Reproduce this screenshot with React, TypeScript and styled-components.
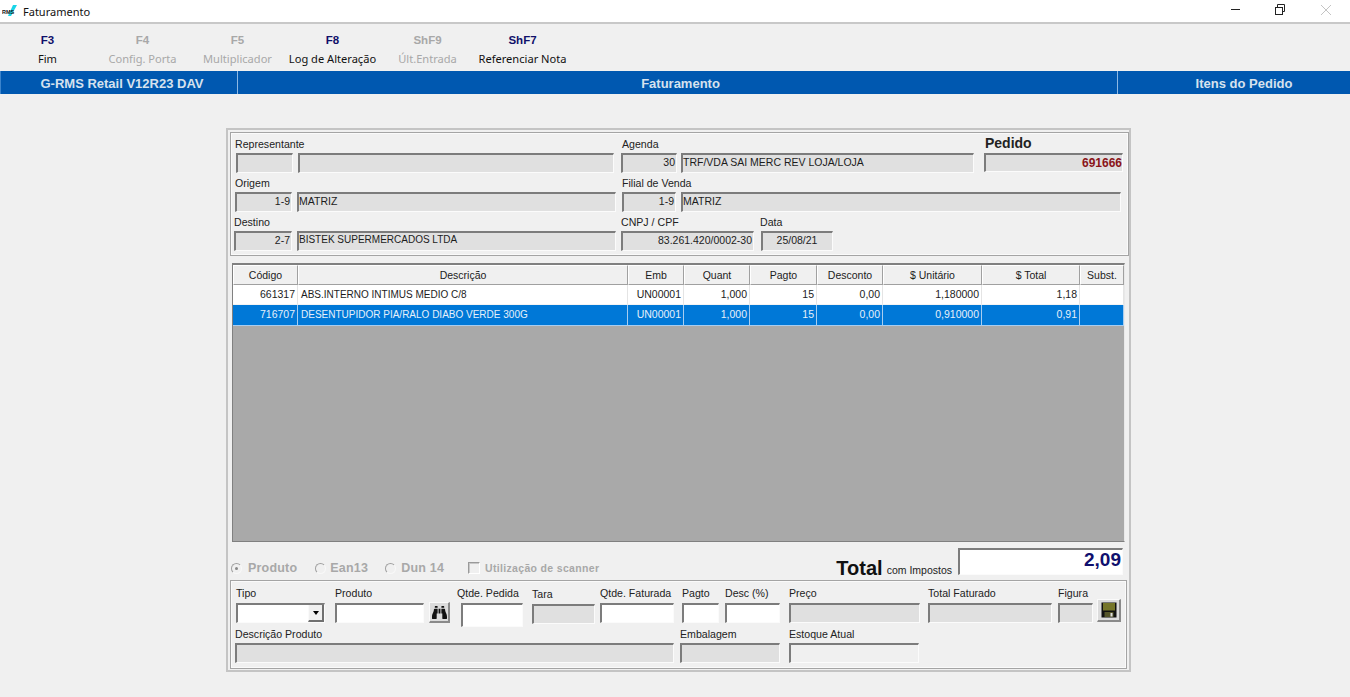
import React from "react";
import styled, { createGlobalStyle } from "styled-components";
import { FaBinoculars } from "react-icons/fa";

const Global = createGlobalStyle`
  html, body { margin: 0; padding: 0; background: #f0f0f0; }
  * { box-sizing: border-box; }
`;

const Page = styled.div`
  width: 1350px; height: 697px; overflow: hidden; background: #f0f0f0;
  font-family: "Liberation Sans", Arial, sans-serif; font-size: 11px; color: #1a1a1a;
  display: flex; flex-direction: column;
`;
const TitleBar = styled.div`
  height: 24px; flex: none; background: #fff; border-bottom: 2px solid #c8c8c8;
  display: flex; align-items: center; padding-left: 2px;
`;
const TitleText = styled.span`
  font-family: "Noto Sans", sans-serif; font-size: 11px; color: #111; margin-left: 4px; flex: 1;
`;
const WinBtn = styled.div<{ $mr?: number }>`
  width: 12px; height: 12px; margin-right: ${(p) => p.$mr ?? 0}px; margin-top: -2px; display: flex;
`;
const Toolbar = styled.div`
  height: 47px; flex: none; display: flex; padding-top: 9px;
`;
const Tool = styled.div<{ $off?: boolean }>`
  width: 95px; text-align: center; color: ${(p) => (p.$off ? "#a8a8a8" : "#111")};
`;
const ToolKey = styled.div<{ $off?: boolean }>`
  font: bold 11.5px/14px "Liberation Sans", sans-serif; color: ${(p) => (p.$off ? "#a8a8a8" : "#10106a")};
`;
const ToolLabel = styled.div`
  font: 11.1px/16px "Noto Sans", sans-serif; margin-top: 4px; white-space: nowrap;
`;
const Band = styled.div`
  height: 23px; flex: none; background: #0058b0; display: flex; border-left: 1px solid #3c84cc;
`;
const BandCell = styled.div<{ $w: number; $pl: number; $sep?: boolean }>`
  width: ${(p) => p.$w}px; padding-left: ${(p) => p.$pl}px; text-align: center;
  border-right: ${(p) => (p.$sep ? "1px solid #8db8e4" : "none")};
  font: bold 13px/25px "Liberation Sans", sans-serif; color: #d6e2ee; white-space: nowrap;
`;
const Panel = styled.div`
  width: 905px; height: 544px; margin: 34px 0 0 226px; flex: none;
  border: 2px solid #c4c4c4; display: flex; flex-direction: column; padding: 2px 0 0 2px;
`;
const Group = styled.div<{ $h: number; $pt: number; $mr?: number }>`
  height: ${(p) => p.$h}px; padding-top: ${(p) => p.$pt}px; margin-right: ${(p) => p.$mr ?? 0}px; flex: none;
  border: 1px solid #a4a4a4; box-shadow: 0 0 0 1px #fafafa inset;
  display: flex; flex-direction: column;
`;
const Row = styled.div<{ $h: number }>`
  height: ${(p) => p.$h}px; display: flex; align-items: flex-start; flex: none;
`;
const FieldWrap = styled.div<{ $w: number; $ml: number; $mt?: number }>`
  width: ${(p) => p.$w}px; margin-left: ${(p) => p.$ml}px; margin-top: ${(p) => p.$mt ?? 0}px; flex: none;
`;
const Label = styled.div<{ $lh: number; $shift?: number; $big?: boolean }>`
  height: ${(p) => p.$lh}px; margin-left: ${(p) => p.$shift ?? 0}px; white-space: nowrap;
  font-weight: ${(p) => (p.$big ? 700 : 400)}; font-size: ${(p) => (p.$big ? "14px" : "10.6px")};
  line-height: ${(p) => (p.$big ? "11px" : `${p.$lh - 2}px`)}; color: #222;
`;
const Box = styled.div<{ $h: number; $tone: "gray" | "white" | "plain"; $align?: string; $fs?: number }>`
  height: ${(p) => p.$h}px; padding: 0 1px 2px 0; overflow: hidden; white-space: nowrap;
  border-style: solid; border-width: 2px 1px 1px 2px; border-color: #7c7c7c #fbfbfb #fbfbfb #7c7c7c;
  background: ${(p) => (p.$tone === "gray" ? "#e0e0e0" : p.$tone === "white" ? "#fff" : "#f0f0f0")};
  text-align: ${(p) => p.$align ?? "left"}; font-size: ${(p) => p.$fs ?? 10.5}px; line-height: 14px; color: #1c1c1c;
`;
const PedidoValue = styled.span`
  display: block; margin-right: -1px; font-size: 12px; font-weight: 700; color: #8a1418; line-height: 17px;
`;
const Grid = styled.div`
  height: 279px; margin: 7px 0 0 2px; width: 893px; flex: none;
  border-style: solid; border-width: 2px 1px 1px 1px; border-color: #808080 #e8e8e8 #808080 #808080;
  display: flex; flex-direction: column; background: #a9a9a9;
`;
const columns = "65px 330px 56px 66px 67px 66px 99px 98px 44px";
const GridRow = styled.div<{ $sel?: boolean }>`
  display: grid; grid-template-columns: ${columns}; height: ${(p) => (p.$sel ? 21 : 20)}px; flex: none;
  background: ${(p) => (p.$sel ? "#0078d7" : "#fff")};
  color: ${(p) => (p.$sel ? "#e6f0fa" : "#1c1c1c")};
`;
const HeadCell = styled.div`
  background: #f0f0f0; text-align: center; font-size: 10.5px; line-height: 18px;
  border-right: 1px solid #a0a0a0; border-bottom: 1px solid #a0a0a0; border-left: 1px solid #fff; border-top: 1px solid #fff;
`;
const Cell = styled.div<{ $r?: boolean; $sel?: boolean }>`
  text-align: ${(p) => (p.$r ? "right" : "left")}; font-size: ${(p) => (p.$r ? 10.5 : 10)}px; line-height: 19px; padding: 0 2px 0 3px; white-space: nowrap;
  border-right: 1px solid ${(p) => (p.$sel ? "#a8cdf0" : "#e4e4e4")};
  border-bottom: 1px solid ${(p) => (p.$sel ? "#a8cdf0" : "#f4f4f4")};
`;
const Options = styled.div`
  height: 38px; flex: none; display: flex; align-items: flex-start;
`;
const RadioWrap = styled.div<{ $ml: number }>`
  margin: 19px 0 0 ${(p) => p.$ml}px; display: flex; align-items: center; height: 14px; flex: none;
`;
const Radio = styled.span<{ $on?: boolean }>`
  width: 11px; height: 11px; border-radius: 50%; flex: none; display: flex; align-items: center; justify-content: center;
  border: 1px solid; border-color: #a0a0a0 #f8f8f8 #f8f8f8 #a0a0a0;
  &::after { content: ""; width: 3px; height: 3px; border-radius: 50%; background: ${(p) => (p.$on ? "#888" : "transparent")}; }
`;
const RadioText = styled.span<{ $ml: number }>`
  margin-left: ${(p) => p.$ml}px; font-size: 12.5px; font-weight: 700; color: #a8a8a8; letter-spacing: 0.2px;
`;
const Check = styled.span`
  width: 12px; height: 12px; flex: none; border: 1px solid; border-color: #9a9a9a #fff #fff #9a9a9a; box-shadow: inset 1px 1px 0 #c8c8c8;
`;
const CheckText = styled.span`
  margin-left: 5px; font-size: 10.5px; font-weight: 700; color: #a8a8a8; letter-spacing: 0.33px;
`;
const TotalLabel = styled.span`
  margin: 13px 0 0 auto; font-size: 20px; font-weight: 700; line-height: 26px; color: #111; flex: none;
`;
const TotalSub = styled.span`
  margin: 21px 0 0 4px; font-size: 10.5px; line-height: 14px; color: #222; flex: none;
`;
const TotalBox = styled.div`
  width: 165px; height: 27px; margin: 6px 6px 0 6px; flex: none; background: #fff; text-align: right; padding-right: 1px;
  border-style: solid; border-width: 2px 1px 1px 2px; border-color: #7c7c7c #fbfbfb #fbfbfb #7c7c7c;
  font-size: 19px; font-weight: 700; line-height: 20px; color: #10106e;
`;
const Raised = styled.div<{ $w: number; $h: number; $ml: number; $mt: number }>`
  width: ${(p) => p.$w}px; height: ${(p) => p.$h}px; margin: ${(p) => p.$mt}px 0 0 ${(p) => p.$ml}px; flex: none;
  border-style: solid; border-width: 1px 2px 2px 1px; border-color: #fafafa #8a8a8a #8a8a8a #fafafa;
  background: #dcdcdc; display: flex; align-items: center; justify-content: center; color: #111;
`;
const SelectArrow = styled.div`
  float: right; width: 16px; height: 18px; margin: -1px -1px 0 0; background: #f0f0f0;
  border-style: solid; border-width: 1px 2px 2px 1px; border-color: #fafafa #707070 #707070 #fafafa;
  display: flex; align-items: center; justify-content: center;
  &::after { content: ""; border: 3.5px solid transparent; border-top: 4px solid #000; border-bottom: none; }
`;

type FieldProps = {
  label?: string; w: number; ml: number; h?: number; lh?: number; mt?: number; value?: string; fs?: number;
  tone?: "gray" | "white" | "plain"; align?: string; shift?: number; children?: React.ReactNode; big?: boolean;
};
const Field = ({ label, w, ml, h = 20, lh = 15, mt, value, fs, tone = "gray", align, shift, children, big }: FieldProps) => (
  <FieldWrap $w={w} $ml={ml} $mt={mt}>
    <Label $lh={lh} $shift={shift} $big={big}>{label}</Label>
    <Box $h={h} $tone={tone} $align={align} $fs={fs}>{value}{children}</Box>
  </FieldWrap>
);

const tools = [
  { k: "F3", l: "Fim" },
  { k: "F4", l: "Config. Porta", off: true },
  { k: "F5", l: "Multiplicador", off: true },
  { k: "F8", l: "Log de Alteração" },
  { k: "ShF9", l: "Últ.Entrada", off: true },
  { k: "ShF7", l: "Referenciar Nota" },
];
const heads = ["Código", "Descrição", "Emb", "Quant", "Pagto", "Desconto", "$ Unitário", "$ Total", "Subst."];
const rows = [
  ["661317", "ABS.INTERNO INTIMUS MEDIO C/8", "UN00001", "1,000", "15", "0,00", "1,180000", "1,18", ""],
  ["716707", "DESENTUPIDOR PIA/RALO DIABO VERDE 300G", "UN00001", "1,000", "15", "0,00", "0,910000", "0,91", ""],
];

export default function App() {
  return (
    <Page>
      <Global />
      <TitleBar>
        <svg width="17" height="14" viewBox="0 0 17 14">
          <polygon points="6,12 11,1 15,1 9,12" fill="#19d5e8" />
          <text x="0" y="10" fontFamily="Liberation Sans" fontSize="5.5" fontWeight="700" fill="#111">RMS</text>
        </svg>
        <TitleText>Faturamento</TitleText>
        <WinBtn $mr={33}>
          <svg width="12" height="12" viewBox="0 0 12 12"><line x1="1" y1="5.5" x2="10" y2="5.5" stroke="#222" /></svg>
        </WinBtn>
        <WinBtn $mr={33}>
          <svg width="12" height="12" viewBox="0 0 12 12" fill="none" stroke="#222"><rect x="0.5" y="3.5" width="7" height="7" /><path d="M2.5 3.5V0.5H9.5V7.5H7.5" /></svg>
        </WinBtn>
        <WinBtn $mr={18}>
          <svg width="12" height="12" viewBox="0 0 12 12" stroke="#c4c4c4"><path d="M1 1L11 11M11 1L1 11" /></svg>
        </WinBtn>
      </TitleBar>
      <Toolbar>
        {tools.map((t) => (
          <Tool key={t.k} $off={t.off}>
            <ToolKey $off={t.off}>{t.k}</ToolKey>
            <ToolLabel>{t.l}</ToolLabel>
          </Tool>
        ))}
      </Toolbar>
      <Band>
        <BandCell $w={237} $pl={6} $sep>G-RMS Retail V12R23 DAV</BandCell>
        <BandCell $w={880} $pl={6} $sep>Faturamento</BandCell>
        <BandCell $w={232} $pl={20}>Itens do Pedido</BandCell>
      </Band>
      <Panel>
        <Group $h={124} $pt={5}>
          <Row $h={39}>
            <Field label="Representante" ml={5} w={57} shift={-1} />
            <Field ml={5} w={316} />
            <Field label="Agenda" ml={7} w={56} shift={1} value="30" align="right" />
            <Field ml={4} w={293} value="TRF/VDA SAI MERC REV LOJA/LOJA" />
            <Field label="Pedido" ml={10} w={139} h={19} big shift={1} align="right"><PedidoValue>691666</PedidoValue></Field>
          </Row>
          <Row $h={39}>
            <Field label="Origem" ml={4} w={57} value="1-9" align="right" />
            <Field ml={5} w={319} value="MATRIZ" />
            <Field label="Filial de Venda" ml={6} w={54} value="1-9" align="right" />
            <Field ml={5} w={440} value="MATRIZ" />
          </Row>
          <Row $h={39}>
            <Field label="Destino" ml={3} w={58} value="2-7" align="right" />
            <Field ml={5} w={319} fs={10} value="BISTEK SUPERMERCADOS LTDA" />
            <Field label="CNPJ / CPF" ml={5} w={133} value="83.261.420/0002-30" align="right" />
            <Field label="Data" ml={7} w={72} shift={-1} value="25/08/21" align="center" />
          </Row>
        </Group>
        <Grid>
          <GridRow>
            {heads.map((h) => <HeadCell key={h}>{h}</HeadCell>)}
          </GridRow>
          {rows.map((r, i) => (
            <GridRow key={r[0]} $sel={i === 1}>
              {r.map((c, j) => <Cell key={j} $r={j !== 1} $sel={i === 1}>{c}</Cell>)}
            </GridRow>
          ))}
        </Grid>
        <Options>
          <RadioWrap $ml={1}><Radio $on /><RadioText $ml={6}>Produto</RadioText></RadioWrap>
          <RadioWrap $ml={18}><Radio /><RadioText $ml={4}>Ean13</RadioText></RadioWrap>
          <RadioWrap $ml={17}><Radio /><RadioText $ml={5}>Dun 14</RadioText></RadioWrap>
          <RadioWrap $ml={24}><Check /><CheckText>Utilização de scanner</CheckText></RadioWrap>
          <TotalLabel>Total</TotalLabel>
          <TotalSub>com Impostos</TotalSub>
          <TotalBox>2,09</TotalBox>
        </Options>
        <Group $h={89} $pt={4} $mr={2}>
          <Row $h={43}>
            <Field label="Tipo" lh={18} ml={5} w={89} tone="white"><SelectArrow /></Field>
            <Field label="Produto" lh={18} ml={10} w={89} tone="white" />
            <Raised $w={21} $h={21} $ml={5} $mt={17}><FaBinoculars size={15} /></Raised>
            <Field label="Qtde. Pedida" lh={18} ml={11} w={62} h={24} shift={-4} tone="white" />
            <Field label="Tara" lh={18} mt={1} ml={9} w={63} />
            <Field label="Qtde. Faturada" lh={18} ml={5} w={74} tone="white" />
            <Field label="Pagto" lh={18} ml={8} w={37} tone="white" />
            <Field label="Desc (%)" lh={18} ml={6} w={55} tone="white" />
            <Field label="Preço" lh={18} ml={9} w={131} />
            <Field label="Total Faturado" lh={18} ml={8} w={124} />
            <Field label="Figura" lh={18} ml={6} w={35} />
            <Raised $w={24} $h={23} $ml={4} $mt={14}>
              <svg width="16" height="16" viewBox="0 0 16 16">
                <rect x="0.5" y="0.5" width="15" height="15" fill="#111" />
                <rect x="2" y="1" width="12" height="7.5" fill="#76762a" />
                <rect x="3.5" y="10" width="9" height="5" fill="#55552a" />
                <rect x="9.5" y="11" width="2" height="3.5" fill="#ddd" />
              </svg>
            </Raised>
          </Row>
          <Row $h={35}>
            <Field label="Descrição Produto" ml={4} w={439} />
            <Field label="Embalagem" ml={6} w={100} />
            <Field label="Estoque Atual" ml={9} w={130} tone="plain" />
          </Row>
        </Group>
      </Panel>
    </Page>
  );
}
